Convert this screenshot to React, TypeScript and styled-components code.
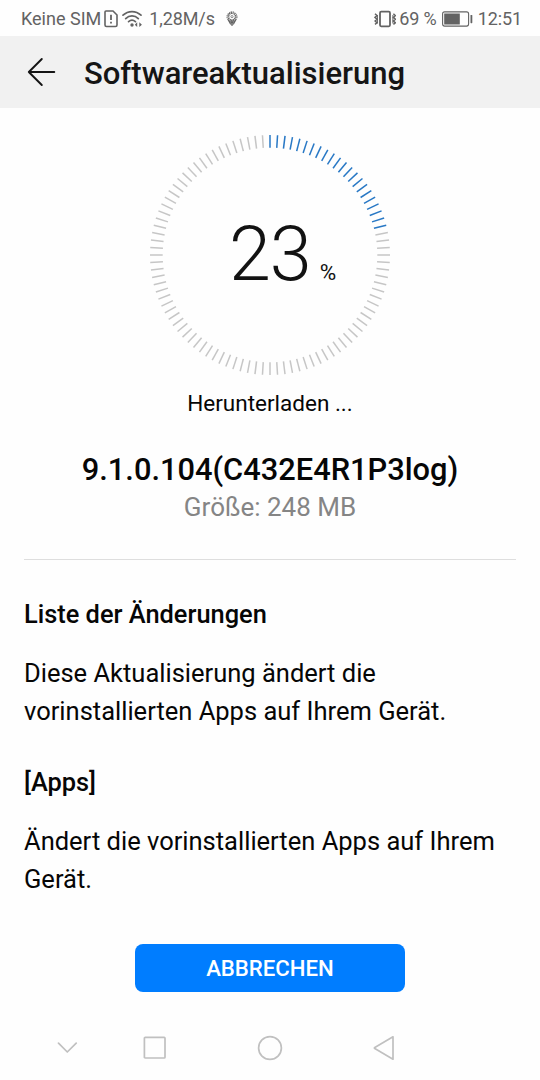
import React from "react";
import styled, { createGlobalStyle } from "styled-components";

const GlobalStyle = createGlobalStyle`
  * { box-sizing: border-box; }
  body { margin: 0; background: #fdfdfd; }
`;

const Screen = styled.div`
  width: 540px;
  height: 1080px;
  display: flex;
  flex-direction: column;
  overflow: hidden;
  background: #fefefe;
  color: #060606;
  font-family: Roboto, "Liberation Sans", sans-serif;
  svg { display: block; flex: none; }
`;

const StatusBar = styled.header`
  height: 36px;
  flex: none;
  display: flex;
  justify-content: space-between;
  padding: 0 18px 0 21px;
  color: #636363;
  font-size: 18px;
  line-height: 38px;
  white-space: nowrap;
`;

const StatusGroup = styled.div`
  display: flex;
  align-items: center;
  height: 38px;
`;

const StatusText = styled.span<{ $left?: number; $spacing?: number }>`
  margin-left: ${(p) => p.$left ?? 0}px;
  letter-spacing: ${(p) => p.$spacing ?? 0}px;
`;

const TitleBar = styled.div`
  height: 72px;
  flex: none;
  display: flex;
  align-items: center;
  padding-left: 27px;
  gap: 28px;
  background: #f1f1f1;
  color: #151515;
`;

const Title = styled.h1`
  margin: 0;
  padding-top: 4px;
  font-size: 31px;
  font-weight: 500;
  line-height: 36px;
`;

const Main = styled.main`
  flex: 1;
  display: flex;
  flex-direction: column;
  align-items: center;
  padding: 27px 24px 0;
`;

const Dial = styled.div`
  display: grid;
  width: 240px;
  height: 240px;
  & > * { grid-area: 1 / 1; }
`;

const Percent = styled.div`
  display: flex;
  align-items: baseline;
  justify-content: center;
  padding: 74px 0 0 25px;
  color: #121212;
`;

const PercentValue = styled.span`
  font-size: 75.5px;
  font-weight: 300;
  line-height: 90px;
  letter-spacing: -1px;
`;

const PercentSign = styled.span`
  margin-left: 9px;
  font-size: 22.5px;
`;

const State = styled.p`
  margin: 15px 0 0;
  font-size: 22.5px;
  line-height: 27px;
`;

const Version = styled.h2`
  margin: 35px 0 0;
  font-size: 30.8px;
  font-weight: 500;
  line-height: 36px;
`;

const Size = styled.p`
  margin: 4px 0 0;
  color: #858585;
  font-size: 26px;
  line-height: 30px;
`;

const Divider = styled.hr`
  width: 100%;
  height: 1px;
  margin: 37px 0 0;
  border: 0;
  background: #dedede;
`;

const Changes = styled.section`
  width: 100%;
  padding-top: 35px;
  font-size: 25.5px;
  line-height: 38px;
`;

const ChangeHeading = styled.h3`
  margin: 0 0 21px;
  font-size: 25.4px;
  font-weight: 500;
  line-height: 38px;
`;

const ChangeText = styled.p`
  margin: 0 0 33px;
`;

const CancelButton = styled.button`
  width: 270px;
  height: 48px;
  flex: none;
  margin: 0 auto;
  padding: 0 0 1px;
  border: 0;
  border-radius: 8px;
  background: #007dff;
  color: #fff;
  font: 500 22.2px Roboto, "Liberation Sans", sans-serif;
`;

const NavBar = styled.nav`
  height: 88px;
  flex: none;
  display: flex;
  align-items: center;
  padding: 24px 0 0 57px;
`;

const NavItem = styled.span<{ $left?: number }>`
  margin-left: ${(p) => p.$left ?? 0}px;
`;

const TICKS = 100;
const FILLED = 22;

function ProgressRing() {
  return (
    <svg width="240" height="240" viewBox="-120 -120 240 240">
      {Array.from({ length: TICKS }, (_, i) => (
        <line
          key={i}
          y1={-120}
          y2={-107.3}
          transform={`rotate(${(i * 360) / TICKS})`}
          stroke={i < FILLED ? "#2878c5" : "#c6c6c6"}
          strokeWidth={1.5}
        />
      ))}
    </svg>
  );
}

const SimIcon = () => (
  <svg width="14" height="18" viewBox="0 0 14 18" fill="none" stroke="currentColor" strokeWidth="1.6">
    <path d="M2 1H9L13 5V15Q13 16.5 11.5 16.5H2.5Q1 16.5 1 15V2Q1 1 2 1Z" />
    <path d="M7 4.8V10M7 11.7V13.6" strokeWidth="1.8" />
  </svg>
);

const WifiIcon = () => (
  <svg width="21" height="18" viewBox="0 0 21 18" fill="none" stroke="currentColor" strokeWidth="1.7" strokeLinecap="round">
    <path d="M1 5.2C6.2.3 13.8.3 19 5.2M3.7 8.6C7.3 5 12.7 5 16.3 8.6M6.6 11.7C8.8 9.8 11.2 9.8 13.4 11.7" />
    <circle cx="10" cy="15" r="1.7" fill="currentColor" stroke="none" />
    <path d="M15.2 12.3V17L12.8 14.8ZM17.3 12.3V17L19.9 14.8Z" fill="currentColor" stroke="none" />
  </svg>
);

const FlowerIcon = () => (
  <svg width="12" height="16" viewBox="0 0 12 16" fill="none" stroke="currentColor">
    <circle cx="6" cy="5.8" r="5" strokeWidth="1" strokeDasharray="1.3 .7" />
    <circle cx="6" cy="5.6" r="3.6" strokeWidth="1.8" strokeDasharray="1.2 .5" />
    <circle cx="6" cy="5.6" r="1.1" strokeWidth=".7" />
    <path d="M2 8.5L4.5 13H7.5L10 8.5M3.5 10H8.5M4.5 11.5H7.5M6 10V15" strokeWidth="1.2" />
  </svg>
);

const VibrateIcon = () => (
  <svg width="22" height="18" viewBox="0 0 22 18" fill="none" stroke="currentColor" strokeWidth="1.3">
    <rect x="6" y="1.7" width="10" height="14.6" rx="1.2" strokeWidth="1.8" />
    <path d="M1 3.8L3 5.6L1 7.4L3 9.2L1 11L3 12.8L1 14.4M19.4 3.8L21.4 5.6L19.4 7.4L21.4 9.2L19.4 11L21.4 12.8L19.4 14.4" strokeWidth="1.5" />
    <path d="M3.4 5V13.5M18.9 5V13.5" strokeWidth="1" />
  </svg>
);

const BatteryIcon = () => (
  <svg width="31" height="16" viewBox="0 0 31 16">
    <rect x=".6" y=".9" width="26" height="14.2" rx="2" fill="none" stroke="currentColor" strokeWidth="1.1" />
    <rect x="2.2" y="2.5" width="15.6" height="11" fill="currentColor" />
    <rect x="28.5" y="4" width="1.8" height="8.2" rx=".6" fill="currentColor" />
  </svg>
);

const BackIcon = () => (
  <svg width="29" height="30" viewBox="0 0 29 30" fill="none" stroke="currentColor" strokeWidth="1.9" strokeLinecap="round" strokeLinejoin="round">
    <path d="M27.3 15H1.8M14.8 2L1.8 15L14.8 28" />
  </svg>
);

interface NavIconProps {
  width: number;
  height: number;
  children: React.ReactNode;
}

const NavIcon = ({ width, height, children }: NavIconProps) => (
  <svg width={width} height={height} viewBox={`0 0 ${width} ${height}`} fill="none" stroke="#c0c0c0" strokeWidth="1.7" strokeLinecap="round" strokeLinejoin="round">
    {children}
  </svg>
);

export default function App() {
  return (
    <Screen>
      <GlobalStyle />
      <StatusBar>
        <StatusGroup>
          <StatusText>Keine SIM</StatusText>
          <StatusText $left={3}><SimIcon /></StatusText>
          <StatusText $left={4}><WifiIcon /></StatusText>
          <StatusText $left={6} $spacing={-0.1}>1,28M/s</StatusText>
          <StatusText $left={11}><FlowerIcon /></StatusText>
        </StatusGroup>
        <StatusGroup>
          <VibrateIcon />
          <StatusText $left={3} $spacing={-0.1}>69 %</StatusText>
          <StatusText $left={5}><BatteryIcon /></StatusText>
          <StatusText $left={5} $spacing={-0.1}>12:51</StatusText>
        </StatusGroup>
      </StatusBar>
      <TitleBar>
        <BackIcon />
        <Title>Softwareaktualisierung</Title>
      </TitleBar>
      <Main>
        <Dial>
          <ProgressRing />
          <Percent>
            <PercentValue>23</PercentValue>
            <PercentSign>%</PercentSign>
          </Percent>
        </Dial>
        <State>Herunterladen ...</State>
        <Version>9.1.0.104(C432E4R1P3log)</Version>
        <Size>Größe: 248 MB</Size>
        <Divider />
        <Changes>
          <ChangeHeading>Liste der Änderungen</ChangeHeading>
          <ChangeText>Diese Aktualisierung ändert die vorinstallierten Apps auf Ihrem Gerät.</ChangeText>
          <ChangeHeading>[Apps]</ChangeHeading>
          <ChangeText>Ändert die vorinstallierten Apps auf Ihrem Gerät.</ChangeText>
        </Changes>
      </Main>
      <CancelButton>ABBRECHEN</CancelButton>
      <NavBar>
        <NavItem>
          <NavIcon width={21} height={12}><path d="M1.5 1.2L10.3 10L19.2 1.2" /></NavIcon>
        </NavItem>
        <NavItem $left={65}>
          <NavIcon width={24} height={24}><rect x="1.4" y="1.4" width="20.6" height="20.6" rx=".8" /></NavIcon>
        </NavItem>
        <NavItem $left={90}>
          <NavIcon width={26} height={26}><circle cx="13" cy="13" r="11.4" /></NavIcon>
        </NavItem>
        <NavItem $left={90}>
          <NavIcon width={22} height={26}><path d="M20 1.8V24.2L1.8 13.6Q1 13 1.8 12.4Z" /></NavIcon>
        </NavItem>
      </NavBar>
    </Screen>
  );
}
